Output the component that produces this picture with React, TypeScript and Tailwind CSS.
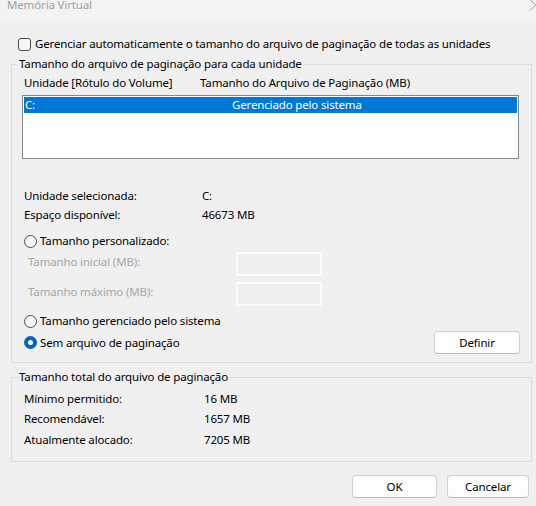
import React from "react";

function Radio({ checked }: { checked?: boolean }) {
  if (checked) {
    return (
      <span className="w-[13px] h-[13px] rounded-full bg-[#0067c0] flex items-center justify-center shrink-0">
        <span className="w-[5px] h-[5px] rounded-full bg-white" />
      </span>
    );
  }
  return <span className="w-[13px] h-[13px] rounded-full border border-[#4a4a4a] bg-[#f6f6f6] shrink-0" />;
}

function Button({ label, w }: { label: string; w: string }) {
  return (
    <div
      className={`${w} h-[23px] bg-[#fdfdfd] border border-[#d0d0d0] border-b-[#bcbcbc] rounded-[4px] flex items-center justify-center text-black`}
    >
      {label}
    </div>
  );
}

export default function App() {
  return (
    <div className="w-[536px] h-[506px] bg-[#f0f0f0] relative overflow-hidden text-[11.5px] tracking-[-0.15px] leading-[16px] text-black font-['Noto_Sans',sans-serif]">
      {/* Title bar */}
      <div className="h-[19px] bg-[#f3f3f3] relative overflow-hidden">
        <div className="absolute left-[7px] top-[-3px] leading-[16px] text-[#a0a0a0]">Memória Virtual</div>
        <svg className="absolute right-0 top-0" width="8" height="12" viewBox="0 0 8 12">
          <path d="M2 -0.5 L7.5 5 L2 10.5" fill="none" stroke="#9a9a9a" strokeWidth="1" />
        </svg>
      </div>

      {/* Checkbox */}
      <div className="mt-[17px] h-[16px] flex items-center pl-[18px] gap-[4px]">
        <span className="w-[13px] h-[13px] rounded-[3px] border border-[#4a4a4a] bg-[#f6f6f6] shrink-0" />
        <span>Gerenciar automaticamente o tamanho do arquivo de paginação de todas as unidades</span>
      </div>

      {/* Group 1 */}
      <fieldset className="mt-[4px] ml-[11px] w-[521px] border border-[#dcdcdc] p-0 m-0">
        <legend className="ml-[6px] px-[1px] leading-[16px]">Tamanho do arquivo de paginação para cada unidade</legend>
        <div className="mt-[3px] h-[16px] flex pl-[12px]">
          <span className="w-[176px]">Unidade [Rótulo do Volume]</span>
          <span>Tamanho do Arquivo de Paginação (MB)</span>
        </div>
        <div className="mt-[4px] ml-[10px] w-[497px] h-[64px] border border-[#828790] bg-white p-[1px]">
          <div className="h-[16px] bg-[#0078d7] text-white flex pl-[1px]">
            <span className="w-[207px]">C:</span>
            <span>Gerenciado pelo sistema</span>
          </div>
        </div>

        <div className="mt-[29px] h-[16px] flex pl-[12px]">
          <span className="w-[178px]">Unidade selecionada:</span>
          <span>C:</span>
        </div>
        <div className="mt-[3px] h-[16px] flex pl-[12px]">
          <span className="w-[178px]">Espaço disponível:</span>
          <span>46673 MB</span>
        </div>

        <div className="mt-[10px] h-[16px] flex items-center pl-[12px] gap-[3px]">
          <Radio />
          <span>Tamanho personalizado:</span>
        </div>
        <div className="mt-[3px] h-[24px] flex items-start pl-[16px] text-[#a6a6a6]">
          <span className="w-[208px] pt-[2px]">Tamanho inicial (MB):</span>
          <span className="w-[86px] h-[24px] border-2 border-[#fbfbfb]" />
        </div>
        <div className="mt-[6px] h-[24px] flex items-start pl-[16px] text-[#a6a6a6]">
          <span className="w-[208px] pt-[2px]">Tamanho máximo (MB):</span>
          <span className="w-[86px] h-[24px] border-2 border-[#fbfbfb]" />
        </div>

        <div className="mt-[7px] h-[16px] flex items-center pl-[12px] gap-[3px]">
          <Radio />
          <span>Tamanho gerenciado pelo sistema</span>
        </div>
        <div className="mt-[2px] h-[23px] flex items-center justify-between pl-[12px] pr-[11px]">
          <div className="flex items-center gap-[3px]">
            <Radio checked />
            <span>Sem arquivo de paginação</span>
          </div>
          <Button label="Definir" w="w-[86px]" />
        </div>
        <div className="h-[8px]" />
      </fieldset>

      {/* Group 2 */}
      <fieldset className="mt-[6px] ml-[11px] w-[521px] border border-[#dcdcdc] p-0 m-0">
        <legend className="ml-[6px] px-[1px] leading-[16px]">Tamanho total do arquivo de paginação</legend>
        <div className="mt-[6px] h-[16px] flex pl-[12px]">
          <span className="w-[180px]">Mínimo permitido:</span>
          <span>16 MB</span>
        </div>
        <div className="mt-[4px] h-[16px] flex pl-[12px]">
          <span className="w-[180px]">Recomendável:</span>
          <span>1657 MB</span>
        </div>
        <div className="mt-[5px] h-[16px] flex pl-[12px]">
          <span className="w-[180px]">Atualmente alocado:</span>
          <span>7205 MB</span>
        </div>
        <div className="h-[13px]" />
      </fieldset>

      {/* Buttons */}
      <div className="mt-[13px] flex justify-end gap-[10px] pr-[7px]">
        <Button label="OK" w="w-[85px]" />
        <Button label="Cancelar" w="w-[82px]" />
      </div>
    </div>
  );
}
